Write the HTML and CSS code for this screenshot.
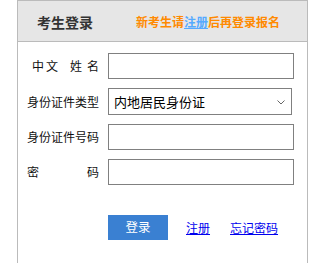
FILE: index.html
```html
<!DOCTYPE html>
<html lang="zh-CN">
<head>
<meta charset="utf-8">
<link rel="stylesheet" href="styles.css">
</head>
<body>
<div class="box">
  <div class="head">
    <span class="title">考生登录</span>
    <span class="notice">新考生请<a href="#" class="reg">注册</a>后再登录报名</span>
  </div>
  <form class="form">
    <label class="lbl lbl-name"><span>中</span><span class="s1">文</span><span class="s2">姓</span><span class="s3">名</span></label>
    <input class="field" type="text">
    <label class="lbl">身份证件类型</label>
    <div class="select">
      <span>内地居民身份证</span>
      <svg class="chev" width="8" height="5" viewBox="0 0 8 5"><path d="M0.5 0.5 L4 4 L7.5 0.5" fill="none" stroke="#666" stroke-width="1"/></svg>
    </div>
    <label class="lbl">身份证件号码</label>
    <input class="field" type="text">
    <label class="lbl lbl-just">密码</label>
    <input class="field" type="password">
    <div class="actions">
      <button type="button" class="btn">登录</button>
      <a href="#" class="link">注册</a>
      <a href="#" class="link">忘记密码</a>
    </div>
  </form>
</div>
</body>
</html>
```
FILE: styles.css
```css
* { box-sizing: border-box; }
html, body { overflow: hidden; }
body {
  margin: 0;
  font-family: "Noto Sans CJK SC", "Microsoft YaHei", sans-serif;
  background: #fff;
}
.box {
  margin-left: 17px;
  width: 291px;
  height: 263px;
  border: 1px solid #bbb;
  border-bottom: none;
}
.head {
  height: 41px;
  background: #e6e6e6;
  border-bottom: 1px solid #bbb;
  display: flex;
  align-items: center;
  padding-left: 19px;
  padding-top: 2px;
}
.title {
  font-size: 14px;
  font-weight: bold;
  color: #333;
  line-height: 1;
}
.notice {
  margin-left: 43px;
  font-size: 12px;
  font-weight: bold;
  color: #ff8a00;
  line-height: 1;
}
.reg {
  color: #55aaff;
  text-decoration: underline;
}
.form {
  display: grid;
  grid-template-columns: 72px 186px;
  column-gap: 9px;
  row-gap: 9px;
  padding: 11px 0 0 9px;
  align-items: center;
}
.lbl {
  font-size: 12px;
  color: #111;
  text-align: right;
  line-height: 1;
  white-space: nowrap;
}
.lbl-name .s1 { margin-left: 2px; }
.lbl-name .s2 { margin-left: 12px; }
.lbl-name .s3 { margin-left: 5px; }
.lbl-just {
  text-align: justify;
  text-align-last: justify;
}
.field {
  width: 186px;
  height: 26px;
  border: 1px solid #808080;
  margin: 0;
  padding: 0 4px;
  font-size: 13px;
  background: #fff;
}
.select {
  width: 184px;
  height: 27px;
  border: 1px solid #808080;
  display: flex;
  align-items: center;
  justify-content: space-between;
  padding: 0 6px 0 5px;
  font-size: 13px;
  color: #000;
  line-height: 1;
}
.chev { margin-top: 1px; }
.actions {
  grid-column: 2;
  display: flex;
  align-items: center;
  margin-top: 21px;
}
.btn {
  width: 60px;
  height: 25px;
  border: none;
  margin: 0;
  padding: 0;
  background: #3a80d2;
  color: #fff;
  font-family: inherit;
  font-size: 12.5px;
  line-height: 1;
}
.link {
  font-size: 12px;
  color: #0000ee;
  text-decoration: underline;
  margin-left: 18px;
  line-height: 1;
}
.link + .link { margin-left: 20px; }
```
